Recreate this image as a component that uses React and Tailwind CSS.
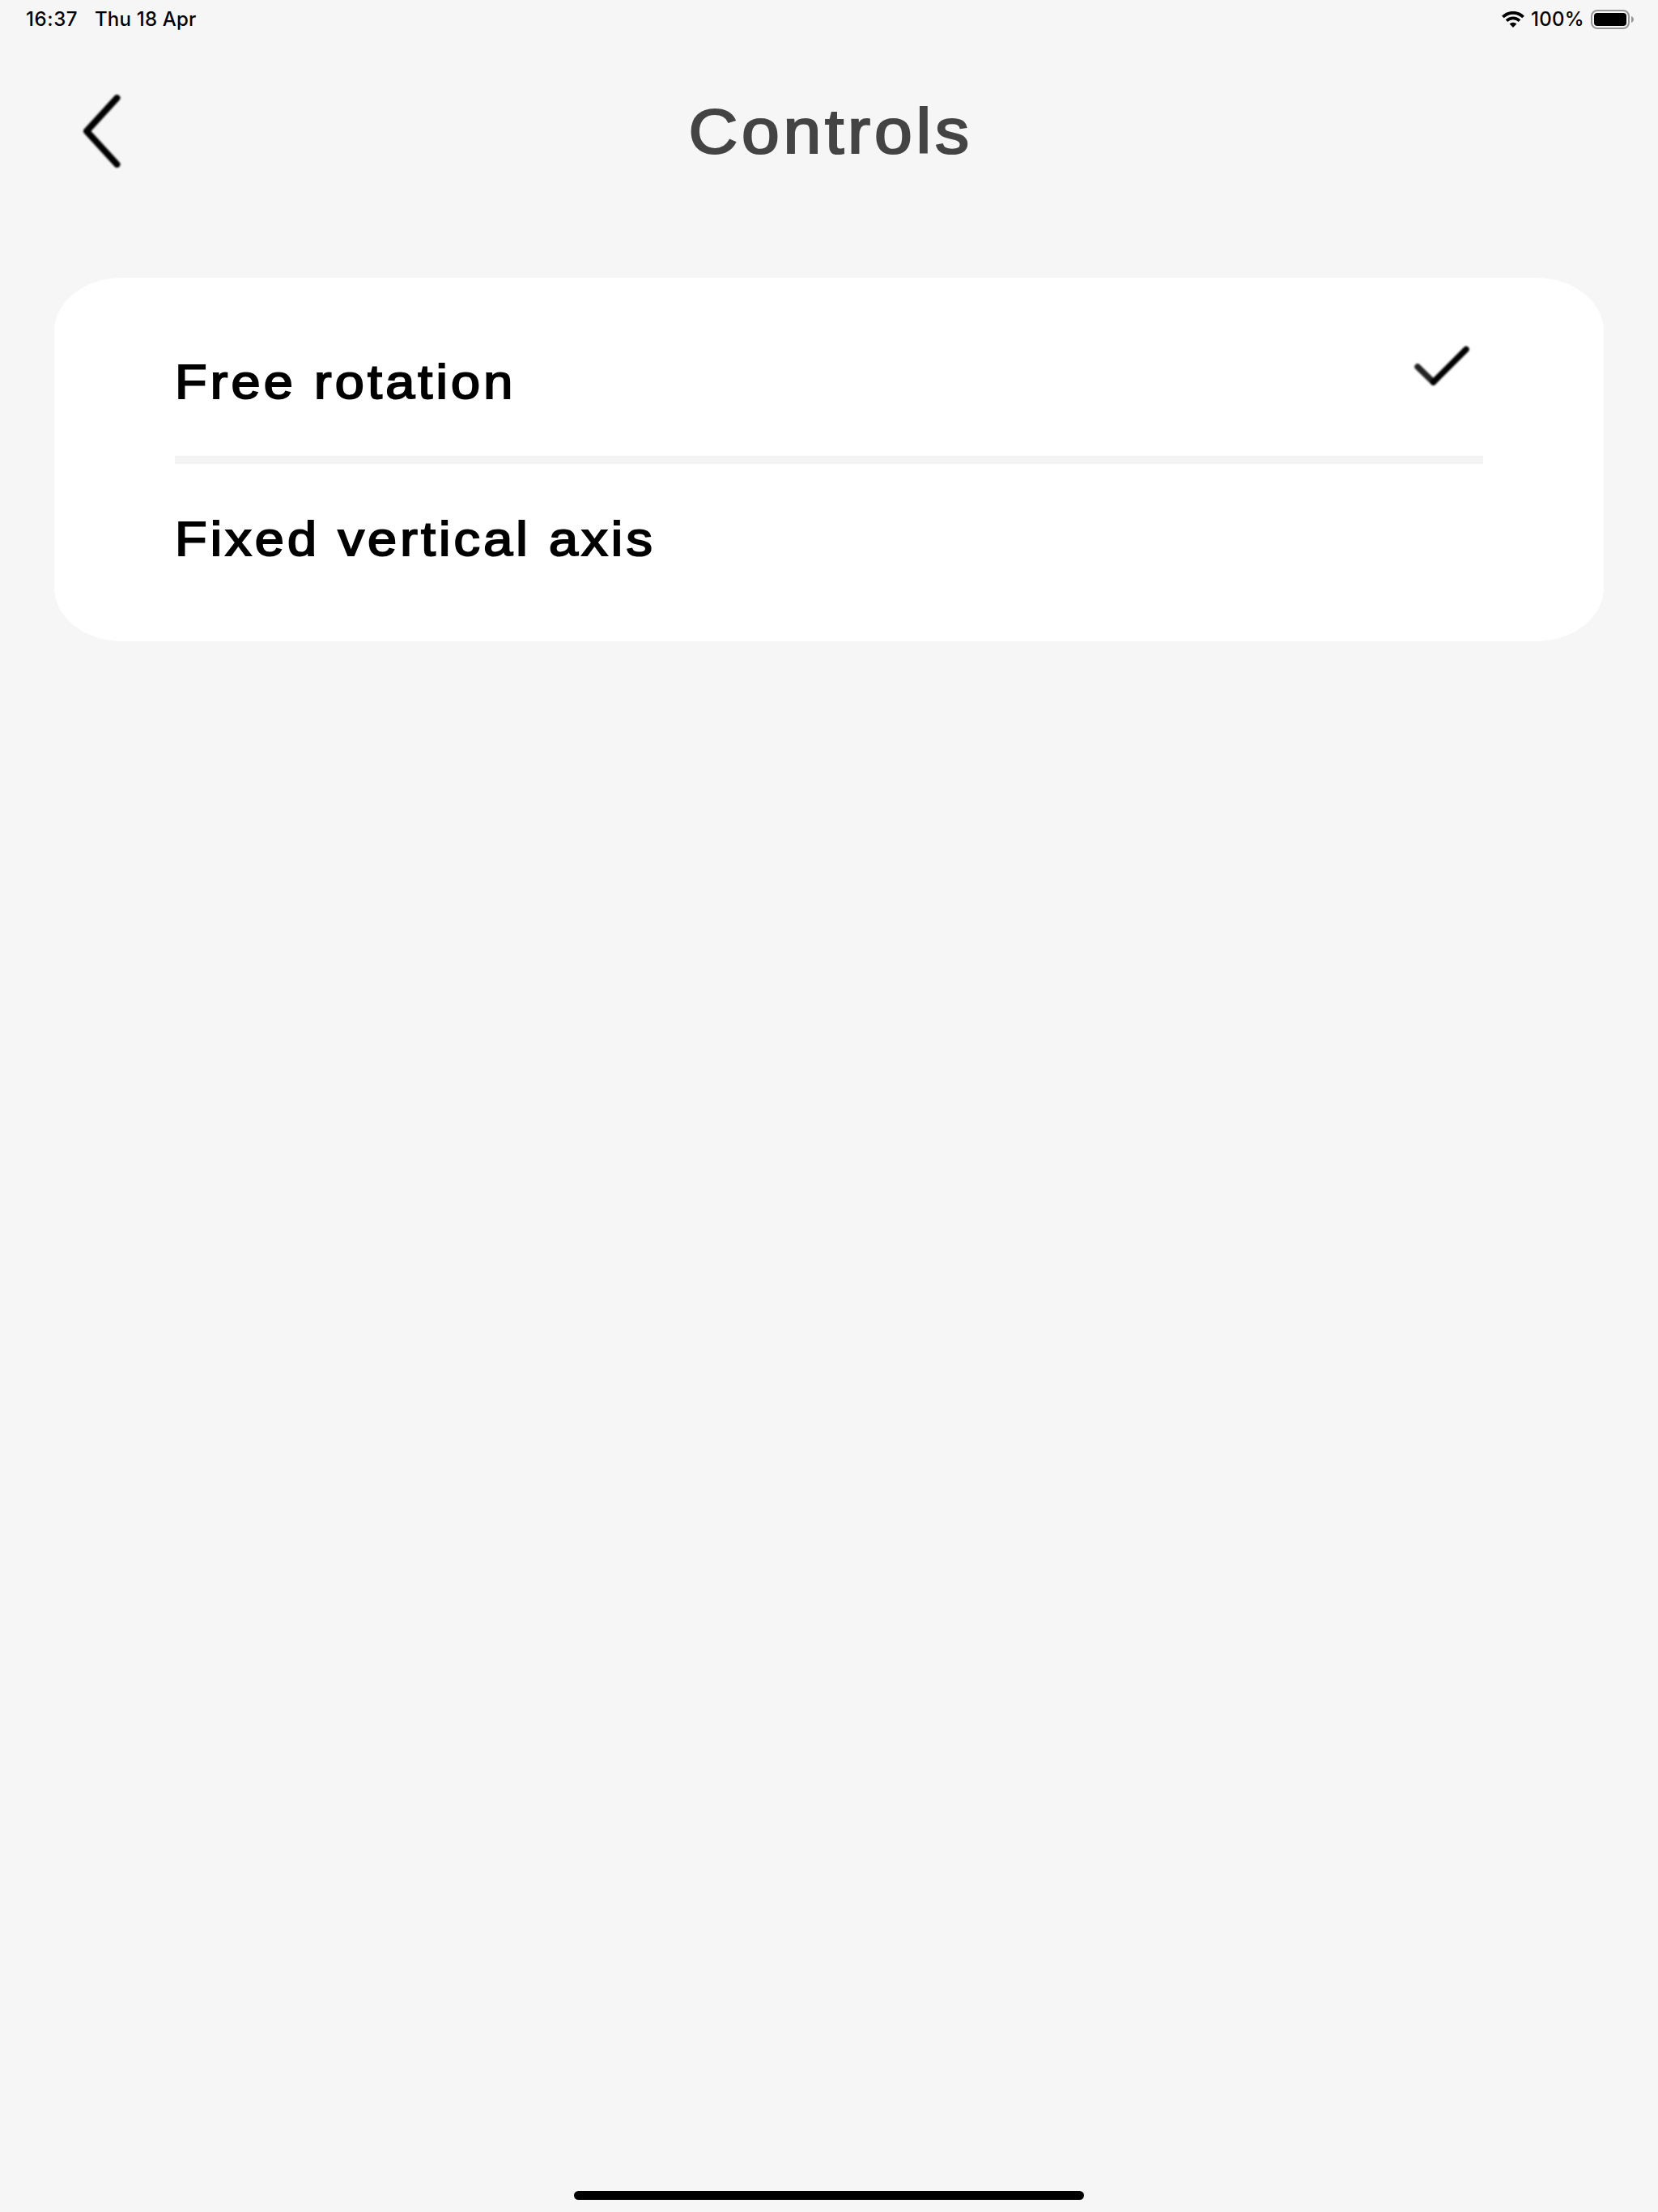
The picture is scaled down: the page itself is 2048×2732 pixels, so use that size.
import clsx from "clsx";

const options = [
  { label: "Free rotation", selected: true },
  { label: "Fixed vertical axis", selected: false },
];

function WifiIcon() {
  return (
    <svg className="w-7 h-5 shrink-0" viewBox="0 0 28 20" fill="none" stroke="#000">
      <path d="M1.4 7a17.8 17.8 0 0 1 25.2 0" strokeWidth="3.8" />
      <path d="M6 11.7a11.2 11.2 0 0 1 16 0" strokeWidth="3.6" />
      <path d="M14 20l-4.400-4.400a6.200 6.200 0 0 1 8.800 0z" fill="#000" stroke="none" />
    </svg>
  );
}

function BatteryIcon() {
  return (
    <svg className="w-[54px] h-6 shrink-0" viewBox="0 0 54 24">
      <rect x="1" y="1" width="46" height="22" rx="7" fill="none" stroke="#979797" strokeWidth="2" />
      <rect x="4" y="4" width="40" height="16" rx="4" fill="#000" />
      <path d="M50 8c4 1.400 4 6.600 0 8z" fill="#979797" />
    </svg>
  );
}

function StatusBar() {
  return (
    <div className="flex items-center h-[48px] pl-8 pr-[29px] font-['Inter',sans-serif] text-[24px] font-medium text-black leading-none">
      <span className="w-[85px] tracking-[0.6px]">16:37</span>
      <span className="tracking-[0.2px]">Thu 18 Apr</span>
      <div className="ml-auto flex items-center">
        <WifiIcon />
        <span className="w-[82px] pl-2 tracking-[0.3px]">100%</span>
        <BatteryIcon />
      </div>
    </div>
  );
}

function Header() {
  return (
    <header className="grid grid-cols-[1fr_auto_1fr] items-center h-[229px]">
      <button className="ml-[102px] mb-[1px] w-[47px] h-[92px]" aria-label="Back">
        <svg className="w-full h-full blur-[1px]" viewBox="0 0 47 92" fill="none">
          <path
            d="M42.500 5L5 46l37.500 41"
            stroke="#000"
            strokeWidth="8"
            strokeLinecap="round"
            strokeLinejoin="round"
          />
        </svg>
      </button>
      <h1 className="mt-[1px] pl-[4px] scale-x-[1.085] text-[77.5px] leading-none tracking-[4.4px] text-[#444] [-webkit-text-stroke:2.2px_#444] [stroke-linejoin:round]">
        Controls
      </h1>
    </header>
  );
}

function CheckIcon() {
  return (
    <svg className="w-[70px] h-[52px] mr-[16px] mb-[38px] blur-[1px]" viewBox="0 0 70 52" fill="none" strokeLinecap="round">
      <path d="M5 27L24.500 46" stroke="#222" strokeWidth="7.500" />
      <path d="M24.500 46L65 5.500" stroke="#000" strokeWidth="7.500" />
    </svg>
  );
}

export default function App() {
  return (
    <div className="flex flex-col w-[2048px] h-[2732px] bg-[#f6f6f6] font-['Liberation_Sans',Arial,sans-serif] overflow-hidden">
      <StatusBar />
      <Header />

      {/* Rotation mode */}
      <main className="mx-[67px] mt-[66px] h-[449px] px-[149px] pt-[36px] bg-white rounded-[84px/66px]">
        {options.map((option, index) => (
          <div
            key={option.label}
            className={clsx(
              "flex items-center justify-between",
              index === 0 ? "h-[184px]" : "h-[184px] border-t-[10px] border-[#f3f3f3] box-content"
            )}
          >
            <span className="mt-[2px] origin-left scale-x-[1.08] text-[60px] leading-none tracking-[3.85px] text-black [-webkit-text-stroke:2px_#000] [stroke-linejoin:round]">
              {option.label}
            </span>
            {option.selected && <CheckIcon />}
          </div>
        ))}
      </main>

      {/* Home indicator */}
      <div className="mt-auto mb-[15px] mx-auto w-[630px] h-[11px] rounded-full bg-black" />
    </div>
  );
}
